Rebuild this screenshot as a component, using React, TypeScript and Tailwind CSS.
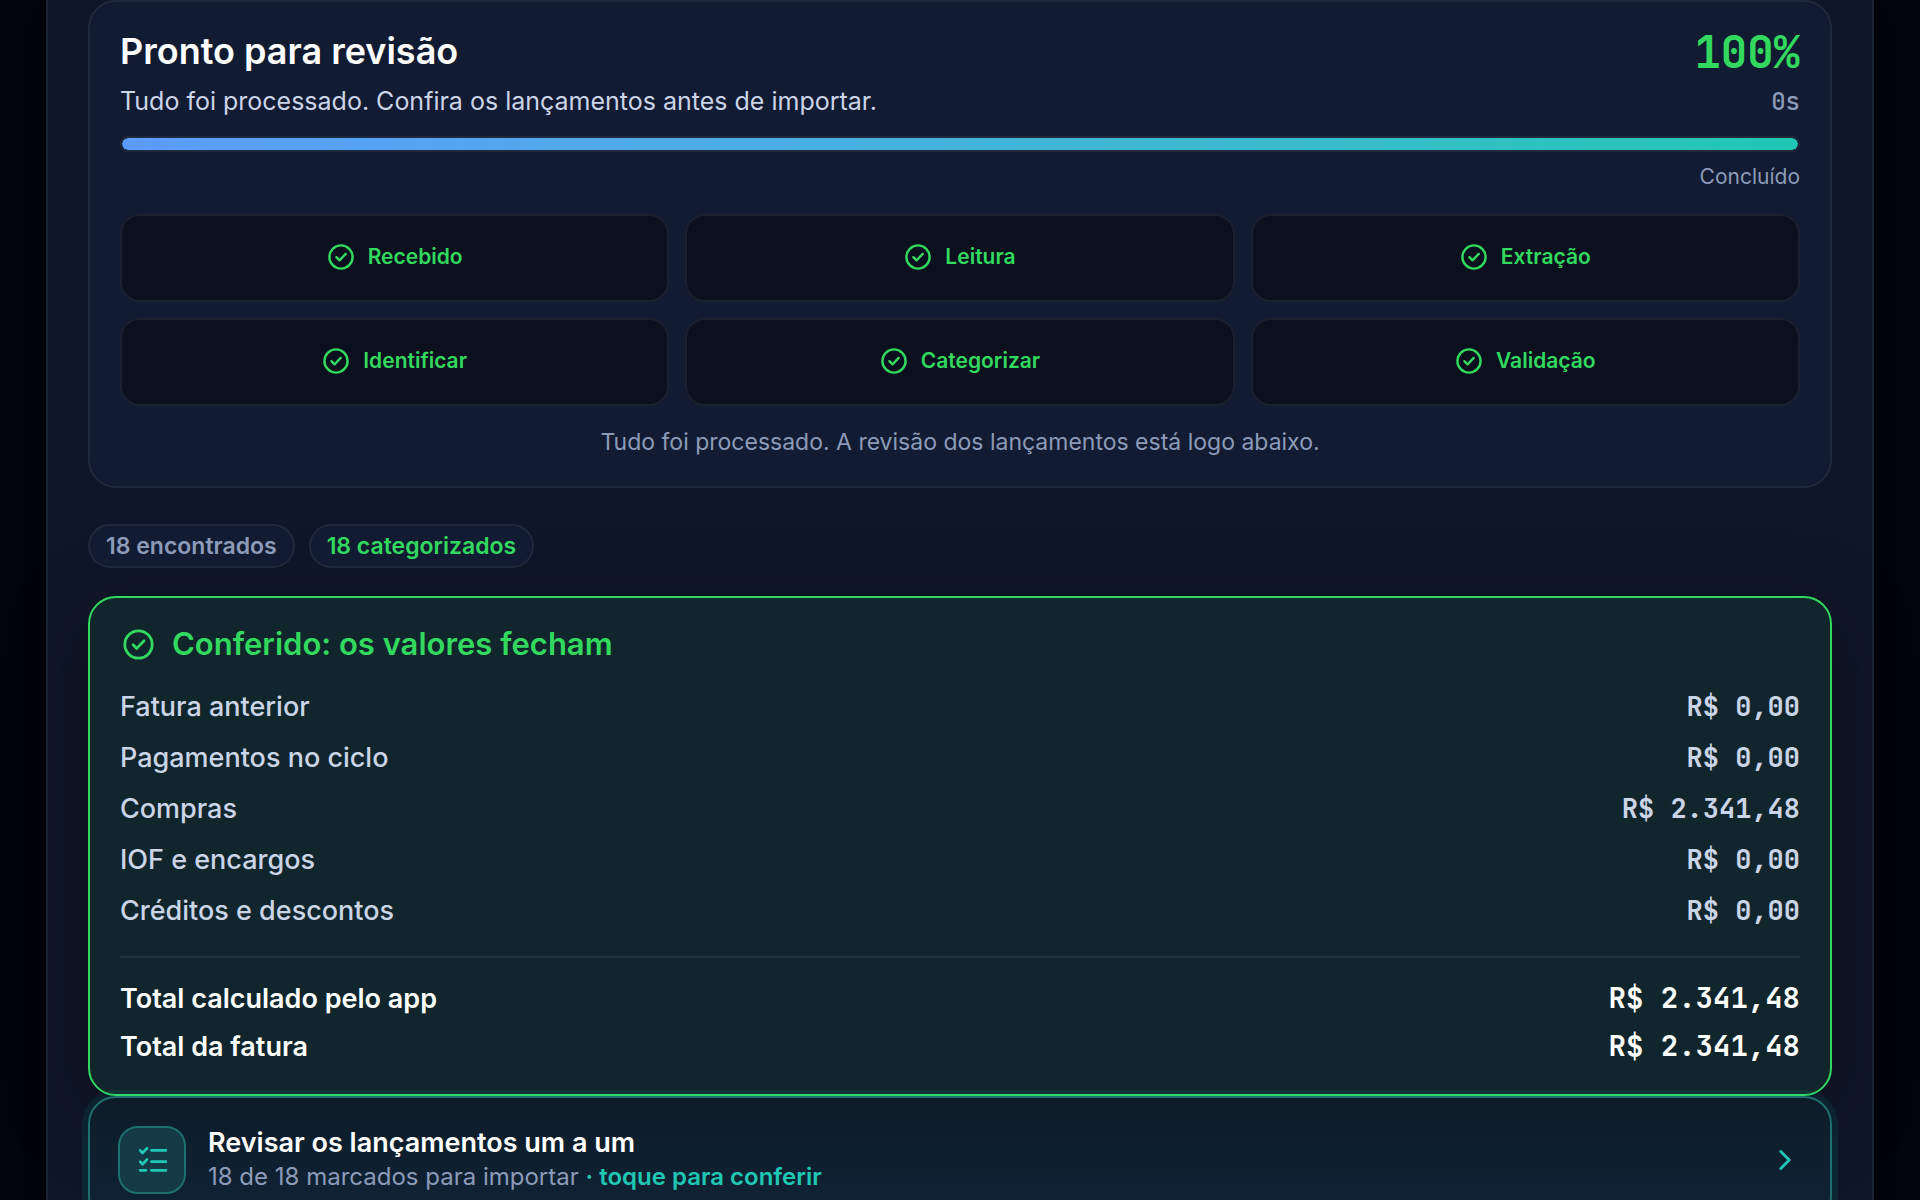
import { ChevronRight } from "lucide-react";

interface Amount {
    label: string;
    value: string;
}

const steps = ["Recebido", "Leitura", "Extração", "Identificar", "Categorizar", "Validação"];

const entries: Amount[] = [
    { label: "Fatura anterior", value: "R$ 0,00" },
    { label: "Pagamentos no ciclo", value: "R$ 0,00" },
    { label: "Compras", value: "R$ 2.341,48" },
    { label: "IOF e encargos", value: "R$ 0,00" },
    { label: "Créditos e descontos", value: "R$ 0,00" },
];

const totals: Amount[] = [
    { label: "Total calculado pelo app", value: "R$ 2.341,48" },
    { label: "Total da fatura", value: "R$ 2.341,48" },
];

function CheckIcon({ size }: { size: number }) {
    return (
        <svg width={size} height={size} viewBox="0 0 28 28" fill="none" stroke="currentColor" strokeWidth="2.4" strokeLinecap="round" strokeLinejoin="round" aria-hidden="true">
            <circle cx="14" cy="14" r="11.6" />
            <path d="m9.4 14.2 3.1 3.1 6.2-6.4" />
        </svg>
    );
}

function ChecklistIcon() {
    return (
        <svg width="34" height="34" viewBox="0 0 34 34" fill="none" stroke="currentColor" strokeWidth="2.8" strokeLinecap="round" strokeLinejoin="round" aria-hidden="true">
            <path d="M16.4 7.3h14.5M16.4 18.7h14.5M16.4 27.3h14.5" />
            <path d="m5.2 7.5 2.4 2.4L12 5.2M5.2 18.8l2.4 2.4 4.4-4.7M5.2 27.3h5.7" />
        </svg>
    );
}

function ProgressCard() {
    return (
        <section className="rounded-[28px] border-2 border-[#1f293b] bg-[#111b31] px-[30px] py-6">
            <div className="flex items-start justify-between">
                <div>
                    <h2 className="text-[36px] leading-[50px] font-semibold text-white">Pronto para revisão</h2>
                    <p className="text-[25px] leading-[50px] text-[#cbd5e8]">Tudo foi processado. Confira os lançamentos antes de importar.</p>
                </div>
                <div className="text-right font-['JetBrains_Mono','DejaVu_Sans_Mono',monospace]">
                    <p className="text-[44px] leading-[52px] font-bold text-[#32d95e]">100%</p>
                    <p className="text-[24px] leading-[48px] font-medium text-[#8c9bb8]">0s</p>
                </div>
            </div>
            <div className="mt-[10px] h-4 overflow-hidden rounded-full border-2 border-[#1f293b] bg-[#0a101e]">
                <div className="h-full w-full rounded-full bg-linear-to-r from-[#5b9bff] to-[#1fc7b4]" />
            </div>
            <p className="mt-2 text-right text-[21px] leading-[34px] text-[#8c9bb8]">Concluído</p>
            <ul className="mt-5 grid grid-cols-3 gap-4">
                {steps.map((step) => (
                    <li key={step} className="flex h-[88px] items-center justify-center gap-[13px] rounded-[20px] border-2 border-[#1a202d] bg-[#0a101e] pb-0.5 text-[21px] font-semibold text-[#32d95e]">
                        <CheckIcon size={28} />
                        {step}
                    </li>
                ))}
            </ul>
            <p className="mt-4 text-center text-[23px] leading-10 text-[#8c9bb8]">Tudo foi processado. A revisão dos lançamentos está logo abaixo.</p>
        </section>
    );
}

function AmountRow({ label, value, total }: Amount & { total?: boolean }) {
    return (
        <div className={total ? "flex h-12 items-baseline justify-between leading-[48px] font-semibold text-white" : "flex h-[51px] items-baseline justify-between leading-[51px] font-medium text-[#cbd5e8]"}>
            <dt className="text-[27px]">{label}</dt>
            <dd className={total ? "font-['JetBrains_Mono','DejaVu_Sans_Mono',monospace] text-[29px] font-bold" : "font-['JetBrains_Mono','DejaVu_Sans_Mono',monospace] text-[27px] font-semibold"}>{value}</dd>
        </div>
    );
}

function CheckCard() {
    return (
        <section className="rounded-[28px] border-2 border-[#32d95e] bg-[#11252d] px-[30px] pt-5 pb-6 shadow-[0_20px_80px_rgba(0,0,0,0.35)]">
            <h2 className="flex h-[53px] items-center gap-4 text-[31px] font-semibold text-[#32d95e]">
                <span className="flex size-9 items-center justify-center">
                    <CheckIcon size={33} />
                </span>
                Conferido: os valores fecham
            </h2>
            <dl className="mt-[10px]">
                {entries.map((entry) => (
                    <AmountRow key={entry.label} {...entry} />
                ))}
                <div className="mt-5 border-t-2 border-[#20333c] pt-4">
                    {totals.map((entry) => (
                        <AmountRow key={entry.label} {...entry} total />
                    ))}
                </div>
            </dl>
        </section>
    );
}

export default function App() {
    return (
        <div className="h-screen overflow-hidden bg-[#02040f] px-[46px] font-['Inter',sans-serif]">
            <main className="min-h-screen border-x-2 border-[#1c2637] bg-[#0e1729] px-10 shadow-[0_0_60px_rgba(0,0,0,0.6)]">
                <ProgressCard />
                <div className="mt-9 flex gap-[14px] text-[23px] font-semibold">
                    <span className="flex h-11 items-center rounded-full border-2 border-[#1f293b] bg-[#111b31] px-4 text-[#8c9bb8]">18 encontrados</span>
                    <span className="flex h-11 items-center rounded-full border-2 border-[#1f293b] bg-[#111b31] px-4 text-[#32d95e]">18 categorizados</span>
                </div>
                <div className="mt-7">
                    <CheckCard />
                </div>
                <button className="flex w-full items-center gap-[22px] rounded-[28px] border-2 border-[#1d6f70] bg-linear-to-b from-[#0c1b28] to-[#102436] p-7 text-left shadow-[0_0_0_6px_rgba(31,199,180,0.08)]">
                    <span className="flex size-[68px] shrink-0 items-center justify-center rounded-[20px] border-2 border-[#1d6f70] bg-[#133a45] text-[#1fc7b4]">
                        <ChecklistIcon />
                    </span>
                    <span className="min-w-0 flex-1">
                        <span className="block text-[27px] leading-[34px] font-semibold text-white">Revisar os lançamentos um a um</span>
                        <span className="block text-[24px] leading-[34px] text-[#8c9bb8]">
                            18 de 18 marcados para importar <b className="font-semibold text-[#1fc7b4]">· toque para conferir</b>
                        </span>
                    </span>
                    <ChevronRight size={34} className="text-[#1fc7b4]" />
                </button>
            </main>
        </div>
    );
}
